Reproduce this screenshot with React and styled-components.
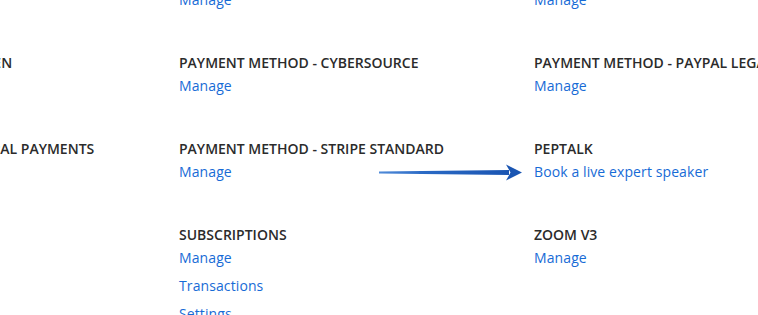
import React from "react";
import styled, { createGlobalStyle } from "styled-components";

const Global = createGlobalStyle`
  html, body { margin: 0; padding: 0; background: #fff; overflow: hidden; }
  body {
    font-family: "Open Sans", "Noto Sans", sans-serif;
    -webkit-font-smoothing: antialiased;
  }
`;

const Page = styled.div`
  position: relative;
  width: 758px;
  height: 315px;
  overflow: hidden;
`;

const Grid = styled.div`
  display: grid;
  grid-template-columns: repeat(3, 355px);
  row-gap: 43px;
  margin-left: -176px;
  margin-top: -33px;
`;

const Block = styled.div`
  display: flex;
  flex-direction: column;
  gap: 8px;
`;

const Heading = styled.div`
  font-size: 14px;
  font-weight: 600;
  line-height: 20px;
  color: #2b2b2b;
  text-transform: uppercase;
  white-space: nowrap;
  margin-bottom: -5px;
`;

const Link = styled.a`
  font-size: 14px;
  line-height: 20px;
  letter-spacing: 0.1px;
  color: #176bd6;
  text-decoration: none;
  white-space: nowrap;
  cursor: pointer;
`;

const Arrow = styled.svg`
  position: absolute;
  left: 377px;
  top: 164px;
`;

const rows = [
  [
    { t: "Integrations", l: ["Manage"] },
    { t: "Payment method - Braintree", l: ["Manage"] },
    { t: "Payment method - Offline", l: ["Manage"] },
  ],
  [
    { t: "Payment method - Adyen", l: ["Manage"] },
    { t: "Payment method - Cybersource", l: ["Manage"] },
    { t: "Payment method - PayPal Legacy", l: ["Manage"] },
  ],
  [
    { t: "Payment method - PayPal Payments", l: ["Manage"] },
    { t: "Payment method - Stripe Standard", l: ["Manage"] },
    { t: "PepTalk", l: ["Book a live expert speaker"] },
  ],
  [
    { t: "", l: [] },
    { t: "Subscriptions", l: ["Manage", "Transactions", "Settings"] },
    { t: "Zoom V3", l: ["Manage"] },
  ],
];

export default function App() {
  return (
    <Page>
      <Global />
      <Grid>
        {rows.flat().map((b, i) => (
          <Block key={i}>
            <Heading>{b.t}</Heading>
            {b.l.map((l) => (
              <Link key={l} role="link" tabIndex={0}>
                {l}
              </Link>
            ))}
          </Block>
        ))}
      </Grid>
      <Arrow width="148" height="17" viewBox="0 0 148 17">
        <defs>
          <linearGradient id="ag" x1="0" x2="1" y1="0" y2="0">
            <stop offset="0" stopColor="#4f8ad8" />
            <stop offset="0.35" stopColor="#2a69c4" />
            <stop offset="1" stopColor="#1a55b2" />
          </linearGradient>
        </defs>
        <polygon points="2,7.6 132,6 132,11 2,9.4" fill="url(#ag)" />
        <polygon points="129,0.5 145,8.5 129,16.5 133.5,8.5" fill="#1a55b2" />
      </Arrow>
    </Page>
  );
}
